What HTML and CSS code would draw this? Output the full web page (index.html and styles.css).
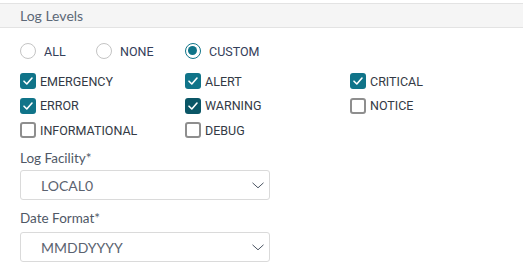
FILE: index.html
```html
<!DOCTYPE html>
<html>
<head>
<meta charset="utf-8">
<link rel="stylesheet" href="styles.css">
</head>
<body>
<div class="header">Log Levels</div>
<div class="content">
  <div class="radios">
    <label class="radio"><span class="circle"></span><span class="rlabel">ALL</span></label>
    <label class="radio"><span class="circle"></span><span class="rlabel">NONE</span></label>
    <label class="radio"><span class="circle on"></span><span class="rlabel">CUSTOM</span></label>
  </div>
  <div class="checks">
    <label class="check"><span class="box on"><svg viewBox="0 0 16 16"><path d="M4 8.2 L6.8 11 L12 5" /></svg></span><span class="clabel">EMERGENCY</span></label>
    <label class="check"><span class="box on"><svg viewBox="0 0 16 16"><path d="M4 8.2 L6.8 11 L12 5" /></svg></span><span class="clabel">ALERT</span></label>
    <label class="check"><span class="box on"><svg viewBox="0 0 16 16"><path d="M4 8.2 L6.8 11 L12 5" /></svg></span><span class="clabel">CRITICAL</span></label>
    <label class="check"><span class="box on"><svg viewBox="0 0 16 16"><path d="M4 8.2 L6.8 11 L12 5" /></svg></span><span class="clabel">ERROR</span></label>
    <label class="check"><span class="box on dark"><svg viewBox="0 0 16 16"><path d="M4 8.2 L6.8 11 L12 5" /></svg></span><span class="clabel">WARNING</span></label>
    <label class="check"><span class="box"></span><span class="clabel">NOTICE</span></label>
    <label class="check"><span class="box"></span><span class="clabel">INFORMATIONAL</span></label>
    <label class="check"><span class="box"></span><span class="clabel">DEBUG</span></label>
  </div>
  <div class="field first">
    <div class="flabel">Log Facility*</div>
    <div class="select"><span>LOCAL0</span><svg class="chev" viewBox="0 0 12 7"><path d="M0.5 0.8 L6 5.8 L11.5 0.8"/></svg></div>
  </div>
  <div class="field second">
    <div class="flabel">Date Format*</div>
    <div class="select"><span>MMDDYYYY</span><svg class="chev" viewBox="0 0 12 7"><path d="M0.5 0.8 L6 5.8 L11.5 0.8"/></svg></div>
  </div>
</div>
</body>
</html>
```
FILE: styles.css
```css
body {
  margin: 0;
  background: #ffffff;
  font-family: Lato, "Liberation Sans", sans-serif;
}
.header {
  margin-top: 3px;
  height: 23px;
  line-height: 23px;
  background: #f5f5f5;
  border-top: 1px solid #e3e3e3;
  border-bottom: 1px solid #e3e3e3;
  padding-left: 20px;
  font-size: 14px;
  color: #5c6877;
}
.content {
  padding-left: 20px;
}
.radios {
  display: flex;
  margin-top: 15px;
  height: 16px;
  align-items: center;
}
.radio {
  display: flex;
  align-items: center;
}
.radio:nth-child(1) { width: 76px; }
.radio:nth-child(2) { width: 89px; }
.circle {
  box-sizing: border-box;
  width: 16px;
  height: 16px;
  border-radius: 50%;
  border: 1px solid #c4c4c4;
  background: #fff;
  display: inline-block;
}
.circle.on {
  border: 1.5px solid #0f7488;
  position: relative;
}
.circle.on::after {
  content: "";
  position: absolute;
  left: 2px;
  top: 2px;
  width: 9px;
  height: 9px;
  border-radius: 50%;
  background: #0f7488;
}
.rlabel {
  margin-left: 8px;
  font-family: Roboto, sans-serif;
  font-size: 12.5px;
  color: #34405a;
}
.checks {
  display: grid;
  grid-template-columns: 165px 165px 165px;
  grid-auto-rows: 16px;
  row-gap: 8.5px;
  margin-top: 14px;
}
.check {
  display: flex;
  align-items: center;
}
.box {
  box-sizing: border-box;
  width: 16px;
  height: 16px;
  border-radius: 3px;
  border: 2px solid #8e8e8e;
  background: #fff;
  display: inline-block;
}
.box.on {
  border: none;
  background: #107489;
}
.box.on.dark {
  background: #0a5666;
}
.box svg {
  width: 16px;
  height: 16px;
  display: block;
}
.box svg path {
  fill: none;
  stroke: #ffffff;
  stroke-width: 1.6;
  stroke-linecap: round;
  stroke-linejoin: round;
}
.clabel {
  margin-left: 4px;
  font-family: Roboto, sans-serif;
  font-size: 12.5px;
  color: #333a45;
}
.field.first {
  margin-top: 12px;
}
.field.first .select {
  margin-top: 3px;
}
.field.second {
  margin-top: 10px;
}
.field.second .select {
  margin-top: 5px;
}
.flabel {
  font-size: 13.5px;
  color: #4f5866;
  height: 17px;
  line-height: 17px;
}
.select {
  box-sizing: border-box;
  width: 250px;
  height: 30px;
  border: 1px solid #dadada;
  border-radius: 3px;
  display: flex;
  align-items: center;
  justify-content: space-between;
  padding-left: 20px;
  padding-right: 4px;
  font-size: 14px;
  color: #5b6370;
}
.chev {
  width: 12px;
  height: 7px;
  margin-right: 1px;
}
.chev path {
  fill: none;
  stroke: #4b5563;
  stroke-width: 1;
}
```
